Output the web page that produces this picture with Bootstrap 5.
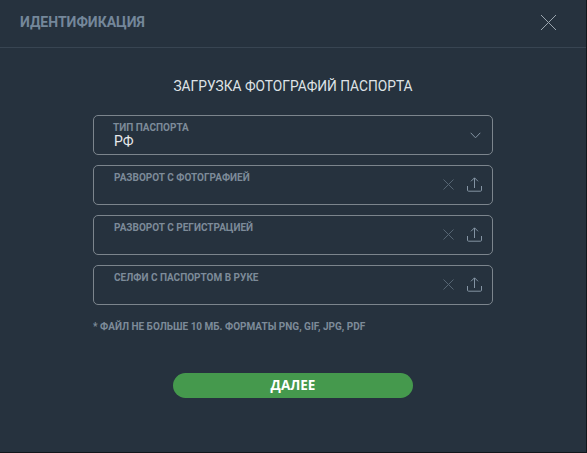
<!DOCTYPE html>
<html lang="ru">
<head>
<meta charset="utf-8">
<title>Идентификация</title>
<link rel="stylesheet" href="https://cdn.jsdelivr.net/npm/bootstrap@5.3.0/dist/css/bootstrap.min.css">
<style>
html,body{height:100%;}
body{background:#12171c;font-family:Roboto,sans-serif;overflow:hidden;}
.dlg{width:586px;height:452px;background:#26323e;}
.dlg-head{height:48px;padding:0 20px;border-bottom:1px solid #384552;}
.dlg-title{font-size:14px;font-weight:700;color:#74879a;line-height:1;margin:0 0 3px;}
.dlg-close{width:17px;height:17px;padding:0;border:0;background:none;margin:0 9px 2px 0;line-height:0;}
.dlg-body{padding-top:30px;}
.dlg-sub{font-size:13.75px;font-weight:400;color:#dfe3e6;line-height:17px;margin:0 0 20px;text-align:center;}
.fld{width:400px;height:40px;margin:0 auto 10px;border:1px solid #7c858d;border-radius:5px;padding-left:20px;padding-right:10px;}
.fld-label{font-size:10px;font-weight:700;color:#7d8b99;line-height:12px;}
.fld-sel{padding-left:19px;padding-right:11px;}
.fld-sel .fld-label{padding-top:4px;}
.fld-sel .fld-val{padding-left:1px;padding-bottom:3px;margin-top:-1px;}
.fld-file .fld-label{padding-top:6px;}
.fld-val{font-size:14px;color:#e6e9eb;line-height:16px;}
.fld-ico{line-height:0;padding-bottom:2px;}
.x-ico{margin-right:5px;}
.note{width:400px;margin:16px auto 0;font-size:10px;font-weight:700;color:#7d8b99;line-height:12px;}
.go{display:block;width:240px;height:25px;margin:40px auto 0;padding:0 0 1px;border:0;border-radius:13px;background:#45994d;color:#fff;font-family:"Open Sans",sans-serif;font-size:13.5px;font-weight:700;line-height:24px;}
.go:hover,.go:active{background:#45994d!important;color:#fff!important;}
</style>
</head>
<body>
<div class="dlg">
  <div class="dlg-head d-flex align-items-center justify-content-between">
    <h1 class="dlg-title">ИДЕНТИФИКАЦИЯ</h1>
    <button class="dlg-close" type="button" aria-label="Закрыть">
      <svg width="17" height="17" viewBox="0 0 17 17" fill="none" stroke="#9aa5ae" stroke-width="1"><path d="M1 1l15 15M16 1L1 16"/></svg>
    </button>
  </div>
  <div class="dlg-body">
    <h2 class="dlg-sub">ЗАГРУЗКА ФОТОГРАФИЙ ПАСПОРТА</h2>
    <div class="fld fld-sel d-flex align-items-center justify-content-between">
      <div>
        <div class="fld-label">ТИП ПАСПОРТА</div>
        <div class="fld-val">РФ</div>
      </div>
      <svg width="11" height="7" viewBox="0 0 11 7" fill="none" stroke="#8494a3" stroke-width="1"><path d="M.7.8l4.8 5 4.8-5"/></svg>
    </div>
    <div class="fld fld-file d-flex justify-content-between">
      <div class="fld-label">РАЗВОРОТ С ФОТОГРАФИЕЙ</div>
      <div class="d-flex align-items-center gap-2 fld-ico">
        <svg class="x-ico" width="11" height="11" viewBox="0 0 11 11" fill="none" stroke="#566573" stroke-width="1"><path d="M.5.5l10 10M10.5.5l-10 10"/></svg>
        <svg width="15" height="15" viewBox="0 0 15 15" fill="none" stroke="#8494a3" stroke-width="1"><path d="M7.5 11V1M4 4.3L7.5 .8 11 4.3M.5 9v4.2q0 1 1 1h12q1 0 1-1V9"/></svg>
      </div>
    </div>
    <div class="fld fld-file d-flex justify-content-between">
      <div class="fld-label">РАЗВОРОТ С РЕГИСТРАЦИЕЙ</div>
      <div class="d-flex align-items-center gap-2 fld-ico">
        <svg class="x-ico" width="11" height="11" viewBox="0 0 11 11" fill="none" stroke="#566573" stroke-width="1"><path d="M.5.5l10 10M10.5.5l-10 10"/></svg>
        <svg width="15" height="15" viewBox="0 0 15 15" fill="none" stroke="#8494a3" stroke-width="1"><path d="M7.5 11V1M4 4.3L7.5 .8 11 4.3M.5 9v4.2q0 1 1 1h12q1 0 1-1V9"/></svg>
      </div>
    </div>
    <div class="fld fld-file d-flex justify-content-between">
      <div class="fld-label">СЕЛФИ С ПАСПОРТОМ В РУКЕ</div>
      <div class="d-flex align-items-center gap-2 fld-ico">
        <svg class="x-ico" width="11" height="11" viewBox="0 0 11 11" fill="none" stroke="#566573" stroke-width="1"><path d="M.5.5l10 10M10.5.5l-10 10"/></svg>
        <svg width="15" height="15" viewBox="0 0 15 15" fill="none" stroke="#8494a3" stroke-width="1"><path d="M7.5 11V1M4 4.3L7.5 .8 11 4.3M.5 9v4.2q0 1 1 1h12q1 0 1-1V9"/></svg>
      </div>
    </div>
    <p class="note">* ФАЙЛ НЕ БОЛЬШЕ 10 МБ. ФОРМАТЫ PNG, GIF, JPG, PDF</p>
    <button class="btn go" type="button">ДАЛЕЕ</button>
  </div>
</div>
<script src="https://cdn.jsdelivr.net/npm/bootstrap@5.3.0/dist/js/bootstrap.bundle.min.js"></script>
</body>
</html>
